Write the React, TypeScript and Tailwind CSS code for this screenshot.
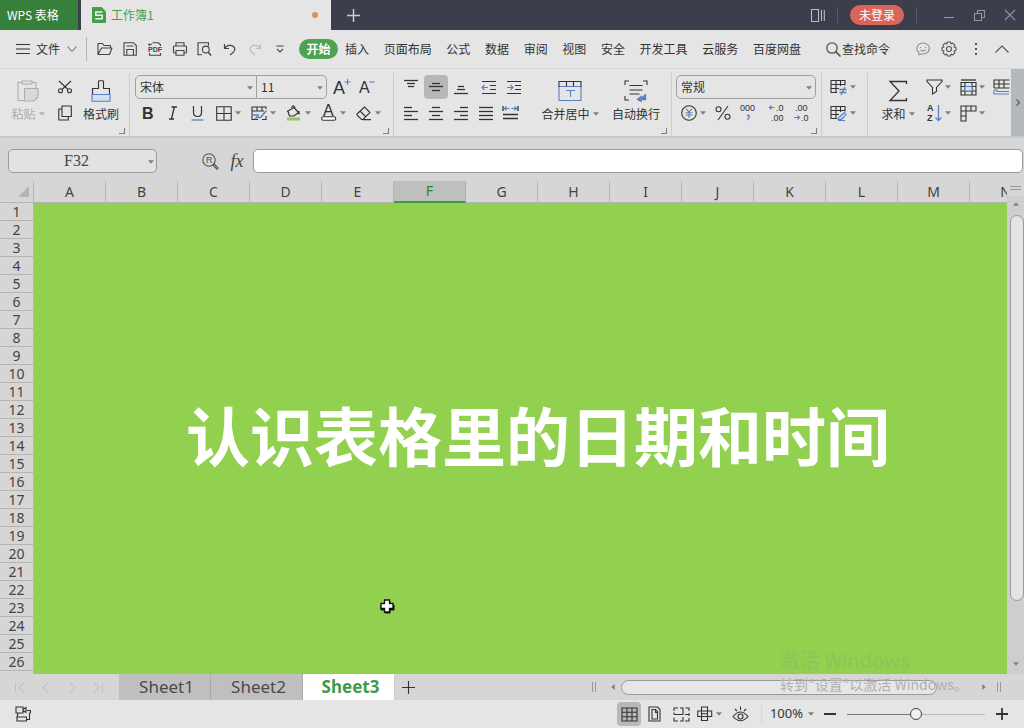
import type { ReactNode } from "react";
import clsx from "clsx";

const BLUE = "#5b80bd";

const COLUMNS = "ABCDEFGHIJKLMN".split("");
const ROWS = Array.from({ length: 26 }, (_, i) => i + 1);
const MENUS = ["插入", "页面布局", "公式", "数据", "审阅", "视图", "安全", "开发工具", "云服务", "百度网盘"];
const SHEETS = ["Sheet1", "Sheet2", "Sheet3"];

type IconProps = { w?: number; h?: number; children: ReactNode; className?: string };

function Icon({ w = 18, h = 18, children, className }: IconProps) {
  return (
    <svg
      width={w}
      height={h}
      viewBox={`0 0 ${w} ${h}`}
      fill="none"
      stroke="currentColor"
      strokeWidth={1.1}
      className={clsx("shrink-0 overflow-visible", className)}
      aria-hidden="true"
    >
      {children}
    </svg>
  );
}

// letter or number inside an icon
function Glyph({ x, y, size, className, children }: {
  x: number;
  y: number;
  size: number;
  className?: string;
  children: string;
}) {
  return (
    <text x={x} y={y} fontSize={size} fill="currentColor" stroke="none" className={clsx("font-['Liberation_Sans',sans-serif]", className)}>
      {children}
    </text>
  );
}

function Caret({ className }: { className?: string }) {
  return (
    <svg width="6" height="4" viewBox="0 0 6 4" className={clsx("shrink-0 fill-[#808080]", className)} aria-hidden="true">
      <path d="M0 .3h6L3 3.7z" />
    </svg>
  );
}

// small square tool button, optionally highlighted
function Tool({ label, active, children }: { label: string; active?: boolean; children: ReactNode }) {
  return (
    <button type="button" aria-label={label} className="flex h-[26px] w-[25px] shrink-0 items-center justify-center">
      <span className={clsx("flex size-6 items-center justify-center", active && "rounded bg-[#b8b8b8]")}>{children}</span>
    </button>
  );
}

// tool with a drop-down arrow
function DropTool({ label, children }: { label: string; children: ReactNode }) {
  return (
    <button type="button" aria-label={label} className="flex h-[26px] shrink-0 items-center">
      <span className="flex w-[22px] justify-center">{children}</span>
      <Caret />
    </button>
  );
}

function Group({ children, className, launcher }: { children: ReactNode; className?: string; launcher?: boolean }) {
  return (
    <div className={clsx("relative mt-1 flex h-[63px] shrink-0 border-r border-[#cdcdcd] pt-px", className)}>
      {children}
      {launcher && (
        <button type="button" aria-label="更多设置" className="absolute right-1 bottom-0.5">
          <Icon w={6} h={6} className="text-[#808080]">
            <path d="M0 5.500h5.500V0" />
          </Icon>
        </button>
      )}
    </div>
  );
}

function Combo({ label, value, className }: { label: string; value: string; className?: string }) {
  return (
    <div className={clsx("relative h-6 border border-[#a0a0a0]", className)}>
      <select aria-label={label} className="size-full appearance-none bg-transparent pl-1 text-[12px] outline-none">
        <option>{value}</option>
      </select>
      <Caret className="pointer-events-none absolute top-[10px] right-[3px]" />
    </div>
  );
}

function Lines({ rows }: { rows: [number, number, number][] }) {
  return (
    <Icon w={16} h={16}>
      {rows.map(([x1, x2, y]) => (
        <path key={y} d={`M${x1} ${y}.5H${x2}`} strokeWidth={1.3} />
      ))}
    </Icon>
  );
}

function TitleBar() {
  return (
    <header className="flex h-[30px] shrink-0 items-center bg-[#3c3f4b] text-[12px] text-[#b9bcc6]">
      <button type="button" className="h-full w-[78px] bg-[#37803c] pl-[7px] text-left text-white">
        WPS 表格
      </button>
      <div className="ml-[3px] flex h-full w-[250px] items-center bg-[#e5e5e5] pr-[13px] pl-[11px] text-[#48a04c]">
        <Icon w={14} h={16}>
          <path d="M1 0h8.500L14 4.500V15q0 1-1 1H1q-1 0-1-1V1q0-1 1-1z" fill="#43a047" stroke="none" />
          <path d="M10.500 5H3.800v3.200h6.400v3.500H3.300" stroke="#e9f5e9" strokeWidth="1.500" />
        </Icon>
        <span className="ml-[5px]">工作簿1</span>
        <span className="ml-auto size-1.5 rounded-full bg-[#dd9152]" />
      </div>
      <button type="button" aria-label="新建" className="ml-4">
        <Icon w={13} h={13} className="text-[#c9cbd2]">
          <path d="M6.500 0v13M0 6.500h13" strokeWidth="1.500" />
        </Icon>
      </button>
      <div className="ml-auto flex items-center">
        <button type="button" aria-label="窗口排列">
          <Icon w={14} h={13}>
            <path d="M.5.5h7v12h-7zM10.500 1v11M13.300 1v11" />
          </Icon>
        </button>
        <span className="ml-3 h-4 w-px bg-[#5a5d69]" />
        <button type="button" className="ml-3 h-5 w-[54px] rounded-full bg-[#d9645a] text-white">
          未登录
        </button>
        <span className="ml-3 h-4 w-px bg-[#5a5d69]" />
        <button type="button" aria-label="最小化" className="ml-[27px]">
          <Icon w={10} h={12} className="text-[#92959f]">
            <path d="M0 8.500h10" />
          </Icon>
        </button>
        <button type="button" aria-label="还原" className="ml-5">
          <Icon w={11} h={11} className="text-[#92959f]">
            <path d="M.5 3.500h7v7h-7zM3.500 3.500v-3h7v7h-3" />
          </Icon>
        </button>
        <button type="button" aria-label="关闭" className="mr-[9px] ml-5">
          <Icon w={10} h={10} className="text-[#92959f]">
            <path d="M0 0l10 10M10 0L0 10" />
          </Icon>
        </button>
      </div>
    </header>
  );
}

function MenuBar() {
  return (
    <nav className="flex h-[38px] shrink-0 items-center text-[12px]">
      <button type="button" className="flex items-center pl-4">
        <Icon w={14} h={12}>
          <path d="M0 1.500h14M0 6h14M0 10.500h14" />
        </Icon>
        <span className="ml-1.5">文件</span>
        <Icon w={10} h={6} className="ml-[7px] text-[#808080]">
          <path d="M.5.5L5 5.300 9.500.5" />
        </Icon>
      </button>
      <span className="ml-[9px] h-6 w-px bg-[#b5b5b5]" />
      <div className="ml-[5px] flex text-[#444]">
        <Tool label="打开">
          <Icon w={16} h={14}>
            <path d="M1 12.500V1.500h4.500l1.500 2h6.500V6M1 12.500L4.500 6H15l-2.500 6.500z" strokeLinejoin="round" />
          </Icon>
        </Tool>
        <Tool label="保存">
          <Icon w={14} h={14}>
            <path d="M1 .7h9.500l2.800 2.800v9.800H1zM3.500 4h7M3.800 13V7.500h6.700V13" />
          </Icon>
        </Tool>
        <Tool label="输出为PDF">
          <Icon w={14} h={14}>
            <path d="M1.500 4V1.800M0 2.300h4M4.500.8h6l2 2V4M1.500 11v2.300h11V11" />
            <Glyph x={0} y={10} size={7} className="font-bold">PDF</Glyph>
          </Icon>
        </Tool>
        <Tool label="打印">
          <Icon w={14} h={14}>
            <path d="M3 4V.8h8V4M3 11H1.500q-1 0-1-1V5q0-1 1-1h11q1 0 1 1v5q0 1-1 1H11M3 8.500h8v4.700H3z" />
          </Icon>
        </Tool>
        <Tool label="打印预览">
          <Icon w={15} h={14}>
            <path d="M5 12.800H1V.8h10.500v3" />
            <circle cx="8.800" cy="7.500" r="3.400" />
            <path d="M11.200 10.200l3 3.300" strokeWidth="1.400" />
          </Icon>
        </Tool>
        <Tool label="撤销">
          <Icon w={14} h={13}>
            <path d="M1.500 1v4.500H6M1.500 5.500C4 2 8 1.500 10.500 3.500c2.500 2 1.500 5.500-3.500 8.500" strokeWidth="1.200" />
          </Icon>
        </Tool>
        <Tool label="恢复">
          <Icon w={14} h={13} className="text-[#bdbdbd]">
            <path d="M12.500 1v4.500H8M12.500 5.500C10 2 6 1.500 3.500 3.500c-2.500 2-1.500 5.500 3.500 8.500" strokeWidth="1.200" />
          </Icon>
        </Tool>
        <Tool label="自定义快速访问">
          <Icon w={8} h={8}>
            <path d="M.5 1h7M1 4l3 3 3-3" />
          </Icon>
        </Tool>
      </div>
      <button type="button" className="ml-[7px] h-5 w-[39px] shrink-0 rounded-full bg-[#4ea351] font-bold text-white">
        开始
      </button>
      <div className="ml-[7px] flex w-[456px] shrink-0 justify-between">
        {MENUS.map((m) => (
          <button key={m} type="button">
            {m}
          </button>
        ))}
      </div>
      <button type="button" className="ml-[25px] flex shrink-0 items-center">
        <Icon w={15} h={15} className="text-[#555]">
          <circle cx="6" cy="6" r="5.200" strokeWidth="1.300" />
          <path d="M9.700 9.700l4.800 4.800" strokeWidth="1.700" />
        </Icon>
        <span className="ml-px">查找命令</span>
      </button>
      <div className="ml-auto flex items-center pr-[15px] text-[#555]">
        <button type="button" aria-label="反馈">
          <Icon w={14} h={14} className="text-[#909090]">
            <path d="M3 12.800L2.800 10.500A6.300 5.500 0 1 1 7 12H5z" />
            <path d="M4.500 5v1M9.500 5v1M4.500 8q2.500 1.500 5 0" />
          </Icon>
        </button>
        <button type="button" aria-label="设置" className="ml-[11px]">
          <Icon w={16} h={16}>
            <path
              d="M6.500 1h3l.6 1.900 1.700-.8 2.100 2.100-.8 1.700 1.900.6v3l-1.900.6.8 1.700-2.100 2.100-1.700-.8-.6 1.900h-3l-.6-1.900-1.700.8-2.100-2.100.8-1.700L1 9.500v-3l1.900-.6-.8-1.700 2.100-2.100 1.700.8z"
              strokeLinejoin="round"
            />
            <circle cx="8" cy="8" r="2.500" />
          </Icon>
        </button>
        <button type="button" aria-label="更多" className="ml-[17px]">
          <Icon w={4} h={14}>
            <path d="M1 2h2M1 7h2M1 12h2" strokeWidth="2" />
          </Icon>
        </button>
        <button type="button" aria-label="折叠功能区" className="ml-[17px]">
          <Icon w={14} h={8}>
            <path d="M.5 7.500L7 1l6.500 6.500" />
          </Icon>
        </button>
      </div>
    </nav>
  );
}

function Ribbon() {
  return (
    <section className="flex h-[70px] shrink-0 overflow-hidden border-t border-b-2 border-t-[#d6d6d6] border-b-[#c6c6c6] text-[12px]">
      <Group className="w-[130px]" launcher>
        <button type="button" className="flex w-14 flex-col items-center pt-1.5 text-[#adadad]">
          <Icon w={22} h={22}>
            <path d="M5 2.500H1v18h6M15 2.500h4V8M5 1h10v3H5z" />
            <path d="M7.500 8.500H21V17l-4 4H7.500z" fill="#d9d9d9" />
          </Icon>
          <span className="mt-[3px] flex items-center gap-[3px] leading-[18px]">
            粘贴
            <Caret className="opacity-50" />
          </span>
        </button>
        <div className="-ml-1 flex flex-col">
          <Tool label="剪切">
            <Icon w={14} h={14}>
              <circle cx="2.500" cy="10.800" r="2" />
              <circle cx="11.500" cy="10.800" r="2" />
              <path d="M1 1l9 8.500M13 1L4 9.500" />
            </Icon>
          </Tool>
          <Tool label="复制">
            <Icon w={14} h={16}>
              <path d="M4 1h9.300v10.500H4zM4 4H.8v11h9.500v-3.500" />
            </Icon>
          </Tool>
        </div>
        <button type="button" className="-ml-[3px] flex w-[54px] flex-col items-center pt-1.5">
          <Icon w={20} h={22}>
            <path d="M1 14.500h18v6.800H1z" fill="#d0e0f4" stroke={BLUE} />
            <path d="M1.500 14V8.500h6v-7Q7.500.7 8.500.7h3q1 0 1 .8v7h6V14" />
          </Icon>
          <span className="mt-[3px] leading-[18px]">格式刷</span>
        </button>
      </Group>

      <Group className="w-[264px] flex-col pl-[5px]" launcher>
        <div className="flex h-[26px] items-center">
          <Combo label="字体" value="宋体" className="w-[122px] rounded-l-[5px]" />
          <Combo label="字号" value="11" className="w-[70px] rounded-r-[5px] border-l-0" />
          <span className="w-0.5" />
          <Tool label="增大字号">
            <Icon w={18} h={16}>
              <Glyph x={0} y={15} size={18}>A</Glyph>
              <path d="M14.500 0v6M11.500 3h6" stroke={BLUE} />
            </Icon>
          </Tool>
          <Tool label="减小字号">
            <Icon w={16} h={16}>
              <Glyph x={0} y={14} size={16}>A</Glyph>
              <path d="M10.500 3h5" stroke={BLUE} />
            </Icon>
          </Tool>
        </div>
        <div className="flex items-center">
          <Tool label="加粗">
            <Icon w={12} h={14}>
              <Glyph x={0} y={13} size={16} className="font-bold">B</Glyph>
            </Icon>
          </Tool>
          <Tool label="倾斜">
            <Icon w={10} h={14}>
              <path d="M3.500 1H9M1 13h5M6.300 1L3.500 13" strokeWidth="1.300" />
            </Icon>
          </Tool>
          <Tool label="下划线">
            <Icon w={13} h={15}>
              <path d="M2.500 0v6.500q0 4 4 4t4-4V0" strokeWidth="1.200" />
              <path d="M.5 14h12" stroke={BLUE} strokeWidth="1.300" />
            </Icon>
          </Tool>
          <div className="ml-[3px] flex gap-[7px]">
            <DropTool label="边框">
              <Icon w={16} h={15}>
                <path d="M.7.7h14.500v13.600H.7zM8 1v13M1 7.500h14" />
              </Icon>
            </DropTool>
            <DropTool label="绘图边框">
              <Icon w={17} h={15}>
                <path d="M15 3V1H1v4h12M1 4v9.500h6M6 1v4M11 1v4M11 13.500h4V10" />
                <path d="M1 9h7M4 13l3-3M15.500 4.500l-6 7H6.500" stroke={BLUE} strokeWidth="1.500" />
              </Icon>
            </DropTool>
            <DropTool label="填充颜色">
              <Icon w={16} h={16}>
                <path d="M5.500 2.500Q7.500-1 9 3M1 6.500l7-4 4.500 5L8 11H3.500L2 6.500M13 6v3.500" strokeWidth="1.200" />
                <path d="M1 14h13" stroke="#92c661" strokeWidth="3" />
              </Icon>
            </DropTool>
            <DropTool label="字体颜色">
              <Icon w={16} h={16}>
                <Glyph x={2} y={11} size={16}>A</Glyph>
                <rect x=".7" y="11.700" width="14" height="3.500" rx="1.500" fill="#fff" />
              </Icon>
            </DropTool>
            <DropTool label="清除">
              <Icon w={16} h={15}>
                <path d="M1 8l7.500-7 5.500 5.500-7 7H5.500L1 9zM4 5l6 6M7 13.600h8" />
              </Icon>
            </DropTool>
          </div>
        </div>
      </Group>

      <Group className="w-[278px] pl-1" launcher>
        <div className="w-[130px]">
          <div className="flex">
            <Tool label="顶端对齐"><Lines rows={[[1, 15, 1], [4, 12, 4], [5, 11, 7]]} /></Tool>
            <Tool label="垂直居中" active><Lines rows={[[4, 12, 4], [1, 15, 7], [4, 12, 11]]} /></Tool>
            <Tool label="底端对齐"><Lines rows={[[5, 11, 7], [4, 12, 10], [1, 15, 14]]} /></Tool>
            <span className="w-[3px]" />
            <Tool label="减少缩进">
              <Icon w={16} h={14}>
                <path d="M1 1.500h14M9 5.500h6M9 9.500h6M1 13.500h14" />
                <path d="M7 7.500H1M3.500 5L1 7.500 3.500 10" stroke={BLUE} />
              </Icon>
            </Tool>
            <Tool label="增加缩进">
              <Icon w={16} h={14}>
                <path d="M1 1.500h14M9 5.500h6M9 9.500h6M1 13.500h14" />
                <path d="M1 7.500h6M4.500 5L7 7.500 4.500 10" stroke={BLUE} />
              </Icon>
            </Tool>
          </div>
          <div className="flex">
            <Tool label="左对齐"><Lines rows={[[1, 9, 2], [1, 15, 6], [1, 9, 10], [1, 15, 14]]} /></Tool>
            <Tool label="水平居中"><Lines rows={[[4, 12, 2], [1, 15, 6], [4, 12, 10], [1, 15, 14]]} /></Tool>
            <Tool label="右对齐"><Lines rows={[[7, 15, 2], [1, 15, 6], [7, 15, 10], [1, 15, 14]]} /></Tool>
            <Tool label="两端对齐"><Lines rows={[[1, 15, 2], [1, 15, 6], [1, 15, 10], [1, 15, 14]]} /></Tool>
            <Tool label="分散对齐">
              <Icon w={17} h={16}>
                <path d="M1 1v5M16 1v5M1 9.500h15M1 13.500h15" strokeWidth="1.300" />
                <path d="M2.500 3.500h5M9.500 3.500h5M4.500 1.500l-2 2 2 2M12.500 1.500l2 2-2 2" stroke={BLUE} />
              </Icon>
            </Tool>
          </div>
        </div>
        <button type="button" className="ml-3 flex w-[60px] flex-col items-center pt-1.5">
          <Icon w={24} h={22}>
            <path d="M1 6.500h22v14H1zM8 10.500h9M12.500 10.500V17" stroke={BLUE} />
            <path d="M1 7V1.500h22V7M8.500 1.500v5M15.500 1.500v5" />
          </Icon>
          <span className="mt-[3px] flex items-center gap-[3px] leading-[18px]">
            合并居中
            <Caret />
          </span>
        </button>
        <button type="button" className="ml-2 flex w-14 flex-col items-center pt-1.5">
          <Icon w={24} h={22}>
            <path d="M1 5V1h4M19 1h4v4M1 16v4h4M5.500 5.500h13M5.500 10h13M5.500 14h10" />
            <path d="M21.500 14v5.500h-7M17 16.500l-3.500 3 3.500 2z" stroke={BLUE} fill={BLUE} strokeWidth="1.300" />
          </Icon>
          <span className="mt-[3px] leading-[18px]">自动换行</span>
        </button>
      </Group>

      <Group className="w-[150px] flex-col pl-1" launcher>
        <div className="flex h-[26px] items-center">
          <Combo label="数字格式" value="常规" className="w-[140px] rounded-[5px]" />
        </div>
        <div className="flex pl-0.5">
          <DropTool label="货币">
            <Icon w={16} h={16}>
              <circle cx="8" cy="8" r="7.300" />
              <path d="M5 3.500l3 3.700 3-3.700M8 7.200V13M4.500 7.700h7M4.500 10h7" stroke={BLUE} />
            </Icon>
          </DropTool>
          <span className="w-1" />
          <Tool label="百分比">
            <Icon w={16} h={16}>
              <circle cx="3.500" cy="4.200" r="2.500" />
              <circle cx="12.500" cy="11.800" r="2.500" />
              <path d="M13 1L3 15" />
            </Icon>
          </Tool>
          <Tool label="千位分隔">
            <Icon w={16} h={18}>
              <Glyph x={0} y={7} size={9}>000</Glyph>
              <path d="M7 11.500h2v2L7.500 16" stroke={BLUE} strokeWidth="1.300" />
            </Icon>
          </Tool>
          <span className="w-[3px]" />
          <Tool label="减少小数位">
            <Icon w={16} h={18}>
              <Glyph x={8} y={7} size={9}>.0</Glyph>
              <Glyph x={3} y={17} size={9}>.00</Glyph>
              <path d="M6.500 3.500h-5M3.500 1.500l-2 2 2 2" stroke={BLUE} />
            </Icon>
          </Tool>
          <Tool label="增加小数位">
            <Icon w={16} h={18}>
              <Glyph x={2} y={7} size={9}>.00</Glyph>
              <Glyph x={8} y={17} size={9}>.0</Glyph>
              <path d="M1 13.500h5.500M4.500 11.500l2 2-2 2" stroke={BLUE} />
            </Icon>
          </Tool>
        </div>
      </Group>

      <Group className="w-[46px] flex-col pl-1.5">
        <DropTool label="条件格式">
          <Icon w={18} h={17}>
            <path d="M7 13.500H1V1.500h14v5M1 5.500h14M1 9.500h8M6 1v12.500M10.500 1v6" />
            <path d="M9.500 10.500h7M9.500 13.500h7M15 8l-4 8" stroke={BLUE} strokeWidth="1.300" />
          </Icon>
        </DropTool>
        <DropTool label="表格样式">
          <Icon w={18} h={17}>
            <path d="M7 13.500H1V1.500h14v5M1 5.500h14M1 9.500h8M6 1v12.500M10.500 1v6" />
            <path d="M8 14.500q0-2 2-3l4.500-4 1.500 2-3.500 4q-1.500 1.500-4.500 1zM8 15.500h7" stroke={BLUE} fill="#c9d8ef" />
          </Icon>
        </DropTool>
      </Group>

      <div className="flex shrink-0 pt-[5px]">
        <button type="button" className="ml-3 flex w-9 flex-col items-center pt-1.5">
          <Icon w={20} h={22}>
            <path d="M18.500 4V1.500H2L11 11 2 20.500h16.500V18" strokeWidth="1.300" />
          </Icon>
          <span className="mt-[3px] flex items-center gap-[3px] leading-[18px]">
            求和
            <Caret />
          </span>
        </button>
        <div className="ml-[7px]">
          <DropTool label="筛选">
            <Icon w={17} h={16}>
              <path d="M1 1h15v1.500L10.500 8.500v4L6.500 15V8.500L1 2.500z" />
            </Icon>
          </DropTool>
          <DropTool label="排序">
            <Icon w={17} h={18}>
              <Glyph x={1} y={7} size={9} className="font-bold">A</Glyph>
              <Glyph x={1} y={17} size={9} className="font-bold">Z</Glyph>
              <path d="M12.500 1v15.500M9.500 13.500l3 3 3-3" stroke={BLUE} strokeWidth="1.300" />
            </Icon>
          </DropTool>
        </div>
        <div className="ml-1.5">
          <DropTool label="格式">
            <Icon w={17} h={17}>
              <path d="M1 1h15" strokeWidth="1.300" />
              <path d="M1 3.500h15V16H1zM5 3.500V16M12 3.500V16M1 7.500h15M1 12h15" />
              <path d="M5 7.500h7V12H5z" stroke={BLUE} fill="#d7e3f6" />
            </Icon>
          </DropTool>
          <DropTool label="行和列">
            <Icon w={17} h={17}>
              <path d="M1 1h15v5H6v10H1zM1 6h5V1M11 1v5M1 11h5" />
            </Icon>
          </DropTool>
        </div>
        <button type="button" aria-label="工作表" className="ml-2 flex h-[26px] items-center">
          <Icon w={17} h={16}>
            <path d="M1 9V1h15.500M1 5h15.500M1 9h15.500M6 1v8M11 1v8" />
            <path d="M1 11v4h15M1 11h3v1.500h12" stroke={BLUE} />
          </Icon>
        </button>
      </div>
      <button type="button" aria-label="向右滚动" className="ml-auto flex w-[13px] shrink-0 items-center justify-center bg-[#b4b9be]">
        <Icon w={4} h={7} className="text-[#555]">
          <path d="M.5.5l3 3-3 3" />
        </Icon>
      </button>
    </section>
  );
}

function FormulaBar() {
  return (
    <div className="flex h-[43px] shrink-0 items-center bg-[#d6d6d6] pt-[3px]">
      <div className="relative ml-2 h-6 w-[149px]">
        <input
          aria-label="名称框"
          defaultValue="F32"
          className="block size-full rounded-[5px] border border-[#9a9a9a] bg-[#e2e2e2] pr-3 text-center font-['Liberation_Serif',serif] text-[16px] text-[#444] outline-none"
        />
        <Caret className="absolute top-[11px] right-[3px]" />
      </div>
      <button type="button" aria-label="查找" className="ml-[45px]">
        <Icon w={17} h={17} className="text-[#555]">
          <circle cx="7" cy="7" r="6.200" />
          <Glyph x={4} y={10} size={9}>R</Glyph>
          <path d="M11 12.200l1.200-1.200 4 4-1.200 1.200z" />
        </Icon>
      </button>
      <button type="button" aria-label="插入函数" className="ml-2.5 w-4 font-['Liberation_Serif',serif] text-[18px] leading-5 text-[#444] italic">
        fx
      </button>
      <input aria-label="编辑栏" className="mr-px ml-2 h-6 min-w-0 flex-1 rounded-[5px] border border-[#9a9a9a] bg-white px-2 outline-none" />
    </div>
  );
}

function Sheet() {
  return (
    <div className="flex min-h-0 flex-1 bg-[#d6d6d6]">
      <div className="relative min-w-0 flex-1 overflow-hidden">
        <table className="h-full w-[1042px] table-fixed border-separate border-spacing-0 font-['Noto_Sans',sans-serif] text-[14px] text-[#444]">
          <thead>
            <tr className="h-[22px]">
              <th className="w-[34px] border-r border-b border-[#b5b5b5] p-0" aria-label="全选">
                <svg width="11" height="11" viewBox="0 0 11 11" className="ml-auto mr-1 fill-[#b4b4b4]" aria-hidden="true">
                  <path d="M11 0v11H0z" />
                </svg>
              </th>
              {COLUMNS.map((c) => (
                <th
                  key={c}
                  scope="col"
                  className={clsx(
                    "w-[72px] border-r p-0 leading-5 font-normal",
                    c === "F"
                      ? "border-b-2 border-r-[#b0b0b0] border-b-[#3f9a45] bg-[#bfbfbf] text-[#2f8137]"
                      : "border-b border-[#b5b5b5]"
                  )}
                >
                  {c}
                </th>
              ))}
            </tr>
          </thead>
          <tbody>
            {ROWS.map((r) => (
              <tr key={r} className="h-[18px]">
                <th scope="row" className="border-r border-b border-[#b5b5b5] p-0 leading-[17px] font-normal">
                  {r}
                </th>
                {r === 1 && (
                  <td
                    colSpan={14}
                    rowSpan={27}
                    className="bg-[#92d050] p-0 pb-3 text-center align-middle font-['Noto_Sans_CJK_SC',sans-serif] text-[64px] leading-[80px] font-bold text-white"
                  >
                    认识表格里的日期和时间
                  </td>
                )}
              </tr>
            ))}
            <tr>
              <td className="border-r border-[#b5b5b5] p-0" />
            </tr>
          </tbody>
        </table>
        {/* cell cursor */}
        <svg width="16" height="16" viewBox="0 0 16 16" className="absolute top-[417px] left-[379px]" aria-hidden="true">
          <path d="M6 3h5v4h4v5h-4v3H6v-3H2V7h4z" fill="#111" stroke="#111" />
          <path d="M5.500 2h5v3.500H14v5h-3.500V14h-5v-3.500H2v-5h3.500z" fill="#fff" stroke="#111" strokeWidth="1.300" />
        </svg>
      </div>
      <div className="flex w-[17px] shrink-0 flex-col items-center">
        <Icon w={11} h={5} className="mt-1 text-[#999]">
          <path d="M0 1.500h11M0 4.500h11" strokeWidth="1" />
        </Icon>
        <div className="mt-1.5 flex w-full flex-1 flex-col items-center bg-[#cecece]">
          <Caret className="mt-1.5 rotate-180" />
          <div className="mt-[9px] ml-0.5 h-[386px] w-[14px] rounded-full border border-[#9a9a9a] bg-[#e4e4e4]" />
          <Caret className="mt-auto mb-2" />
        </div>
      </div>
    </div>
  );
}

function SheetTabs() {
  return (
    <div className="relative flex h-[26px] shrink-0 items-center bg-[#d6d6d6]">
      <div className="flex w-[119px] items-center justify-between pr-4 pl-[15px] text-[#c2c2c2]">
        {["M.5.5v10M9 .5l-5 5 5 5", "M7 .5l-5 5 5 5", "M3 .5l5 5-5 5", "M9.500.5v10M1 .5l5 5-5 5"].map((d) => (
          <button key={d} type="button" aria-label="切换工作表">
            <Icon w={10} h={11}>
              <path d={d} />
            </Icon>
          </button>
        ))}
      </div>
      {SHEETS.map((s) => (
        <button
          key={s}
          type="button"
          className={clsx(
            "h-full w-[92px] border-r pl-1 font-['Noto_Sans',sans-serif] text-[17px] leading-[26px]",
            s === "Sheet3" ? "border-[#ccc] bg-white font-bold text-[#43994a]" : "border-[#a9a9a9] bg-[#bfbfbf] text-[#4a4a4a]"
          )}
        >
          {s}
        </button>
      ))}
      <button type="button" aria-label="新建工作表" className="ml-[7px]">
        <Icon w={13} h={13}>
          <path d="M6.500 0v13M0 6.500h13" />
        </Icon>
      </button>
      <div className="ml-auto flex w-[432px] items-center pr-[23px] text-[#999]">
        <Icon w={4} h={10} className="mr-[14px]">
          <path d="M.5 0v10M3.500 0v10" strokeWidth="1" />
        </Icon>
        <Caret className="mr-[5px] rotate-90" />
        <div className="h-[15px] w-[316px] rounded-full border border-[#9a9a9a] bg-[#e6e6e6]" />
        <Caret className="ml-auto -rotate-90" />
        <Icon w={4} h={10} className="ml-2.5">
          <path d="M.5 0v10M3.500 0v10" strokeWidth="1" />
        </Icon>
      </div>
      {/* system activation watermark */}
      <div className="pointer-events-none absolute right-[51px] bottom-[5px] w-[193px] whitespace-nowrap">
        <p className="text-[20px] leading-[26px] text-[#8fc35a]">激活 Windows</p>
        <p className="text-[14px] leading-[22px] text-[#b0b0b0]">转到"设置"以激活 Windows。</p>
      </div>
    </div>
  );
}

function StatusBar() {
  return (
    <footer className="flex h-7 shrink-0 items-center">
      <button type="button" aria-label="录制宏" className="ml-[15px]">
        <Icon w={17} h={16}>
          <path d="M1 1h7v6H1zM8 3.500L11 1.500v5L8 4.500M3 7.500L2 11M12 4.500h3.500v2L14.500 7.500v6h-3M2 11h9.500v4H2z" />
        </Icon>
      </button>
      <div className="ml-auto flex items-center pr-4">
        <Tool label="普通视图" active>
          <Icon w={17} h={15}>
            <path d="M1 1h15v13H1zM1 5.300h15M1 9.700h15M6 1v13M11 1v13" />
          </Icon>
        </Tool>
        <Tool label="页面布局">
          <Icon w={13} h={16}>
            <path d="M1 1h8.500L12 3.500V15H1zM4 3.500h3.500l2 2V13H4zM7.500 4v2.500h2" />
          </Icon>
        </Tool>
        <span className="w-0.5" />
        <Tool label="分页预览">
          <Icon w={17} h={15}>
            <path d="M1 4V1h4M7 1h3v6.500H1M12.500 1H16v3M16 6v3M12 7.500h4M1 10.500V14h4M7 14h3v-4M16 11v3h-4M1 7.500v-2" />
          </Icon>
        </Tool>
        <DropTool label="阅读模式">
          <Icon w={16} h={16}>
            <path d="M4.500 1h6v13.500h-6zM.7 5h14v5.500H.7zM4.500 7.700h6" />
          </Icon>
        </DropTool>
        <span className="w-1.5" />
        <Tool label="护眼模式">
          <Icon w={17} h={16}>
            <path d="M1 10.500q7.500-9 15 0-7.500 8.500-15 0zM3 3l2 2M8.500.5V4M14 3l-2 2" />
            <circle cx="8.500" cy="10.500" r="2.500" />
          </Icon>
        </Tool>
        <span className="ml-2 h-5 w-px bg-[#d6d6d6]" />
        <button type="button" className="ml-2 flex items-center gap-[5px] font-['Noto_Sans',sans-serif] text-[13px]">
          100%
          <Caret />
        </button>
        <button type="button" aria-label="缩小" className="ml-2.5">
          <Icon w={12} h={12}>
            <path d="M0 6h12" strokeWidth="2" />
          </Icon>
        </button>
        <input
          type="range"
          aria-label="显示比例"
          min={0}
          max={100}
          defaultValue={50}
          className="ml-[11px] h-px w-[138px] appearance-none bg-linear-to-r from-[#777] from-50% to-[#bbb] to-50% [&::-webkit-slider-thumb]:size-3 [&::-webkit-slider-thumb]:appearance-none [&::-webkit-slider-thumb]:rounded-full [&::-webkit-slider-thumb]:border [&::-webkit-slider-thumb]:border-[#444] [&::-webkit-slider-thumb]:bg-[#f0f0f0]"
        />
        <button type="button" aria-label="放大" className="ml-[11px]">
          <Icon w={12} h={12}>
            <path d="M0 6h12M6 0v12" strokeWidth="1.800" />
          </Icon>
        </button>
      </div>
    </footer>
  );
}

export default function App() {
  return (
    <div className="flex h-screen flex-col overflow-hidden bg-[#e5e5e5] font-['Noto_Sans_CJK_SC',sans-serif] text-[#333]">
      <TitleBar />
      <MenuBar />
      <Ribbon />
      <FormulaBar />
      <Sheet />
      <SheetTabs />
      <StatusBar />
    </div>
  );
}
